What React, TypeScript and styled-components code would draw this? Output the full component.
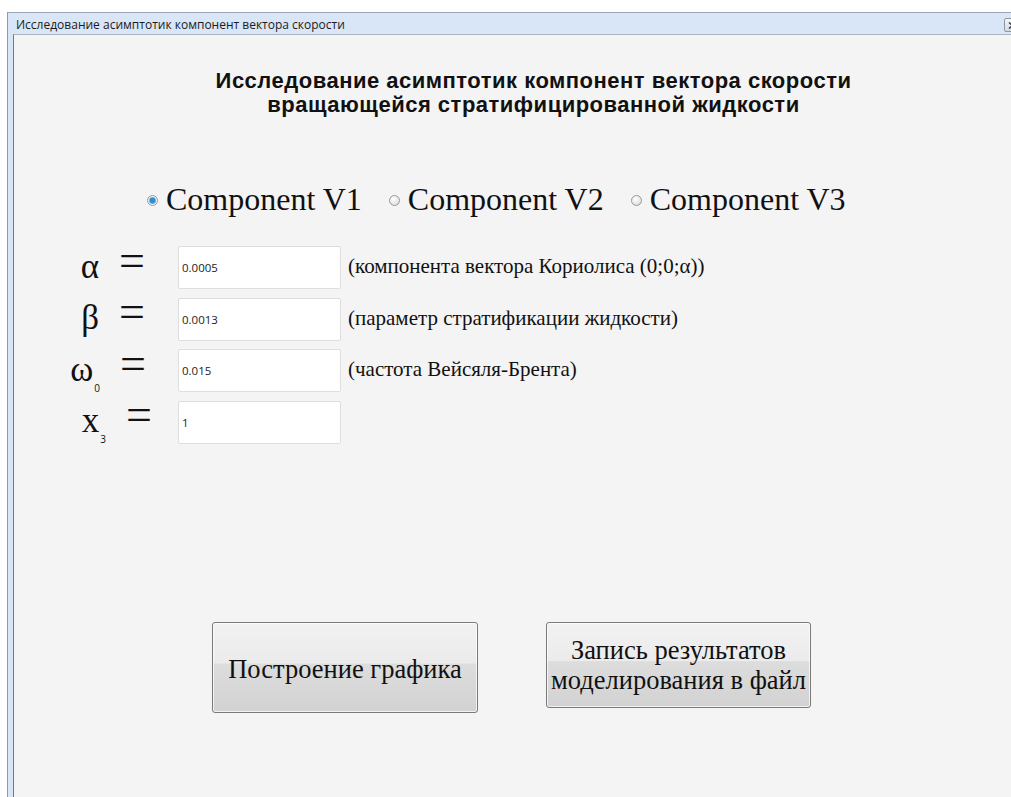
import React, { useState } from 'react';
import styled, { createGlobalStyle } from 'styled-components';

const GlobalStyle = createGlobalStyle`
  html, body {
    margin: 0;
    padding: 0;
    background: #ffffff;
    overflow: hidden;
  }
`;

const Window = styled.div`
  margin: 12px 0 0 7px;
  width: 1019px;
  height: 785px;
  display: flex;
  flex-direction: column;
  border-top: 1px solid #9aa6b4;
  border-left: 1px solid #8f9aa8;
  background: #d9e6f7;
`;

const TitleBar = styled.div`
  height: 20px;
  display: flex;
  align-items: center;
  justify-content: space-between;
  padding: 1px 6px 0 8px;
  font-family: 'Open Sans', 'Noto Sans', sans-serif;
  font-size: 12px;
  color: #1b1b1b;
  flex-shrink: 0;
`;

const CloseButton = styled.div`
  width: 15px;
  height: 12px;
  margin-top: 2px;
  border: 1px solid #8d96a1;
  border-radius: 2px;
  background: linear-gradient(#f4f6f8, #d5dbe2);
  display: flex;
  align-items: center;
  justify-content: center;
`;

const Frame = styled.div`
  flex: 1;
  display: flex;
  padding-left: 5px;
  min-height: 0;
`;

const Content = styled.div`
  flex: 1;
  border-left: 1px solid #6f7a87;
  border-top: 1px solid #aab4c0;
  background: #f4f4f4;
  display: flex;
  flex-direction: column;
`;

const Heading = styled.h1`
  margin: 34px 0 0 26px;
  font-family: 'Liberation Sans', Arial, sans-serif;
  font-size: 22px;
  letter-spacing: 0.5px;
  line-height: 24px;
  font-weight: 700;
  text-align: center;
  color: #111;
`;

const RadioGroup = styled.div`
  margin: 64px 0 0 133px;
  display: flex;
  align-items: center;
  gap: 27px;
`;

const RadioOption = styled.label`
  display: flex;
  align-items: center;
  gap: 8px;
  font-family: 'Liberation Serif', 'Times New Roman', serif;
  font-size: 32px;
  color: #111;
  cursor: pointer;
`;

const RadioDot = styled.span<{ checked: boolean }>`
  width: 11px;
  height: 11px;
  margin-top: 2px;
  border-radius: 50%;
  box-sizing: border-box;
  border: 1px solid #9a9a9a;
  background: ${({ checked }) =>
    checked
      ? 'radial-gradient(circle, #2f8fd6 0 2.6px, #9fc9ea 3.4px, #eef3f7 4px)'
      : 'radial-gradient(circle at 40% 35%, #ffffff, #d4d4d4)'};
`;

const Params = styled.div`
  margin-top: 28px;
  display: grid;
  grid-template-columns: 164px 163px auto;
  grid-auto-rows: 43px;
  row-gap: 8.5px;
  align-items: center;
`;

const Symbol = styled.div<{ shift: number }>`
  justify-self: end;
  padding-right: ${({ shift }) => 33 - shift}px;
  display: flex;
  align-items: baseline;
  font-family: 'Liberation Serif', 'Times New Roman', serif;
  font-size: 35px;
  line-height: 1;
  color: #111;
  position: relative;
  top: -5px;
`;

const Sub = styled.span`
  font-family: 'Open Sans', 'Noto Sans', sans-serif;
  font-size: 10px;
  position: relative;
  top: 11px;
  margin-left: 1px;
`;

const Equals = styled.span`
  font-size: 46px;
  margin-left: 20px;
  position: relative;
  top: -2px;
`;

const Field = styled.input`
  box-sizing: border-box;
  width: 163px;
  height: 43px;
  border: 1px solid #dedede;
  border-radius: 2px;
  background: #ffffff;
  padding: 0 3px;
  font-family: 'Open Sans', 'Noto Sans', sans-serif;
  font-size: 11.5px;
  color: #222;
  outline: none;
`;

const Hint = styled.div`
  padding-left: 7px;
  margin-top: -2px;
  font-family: 'Liberation Serif', 'Times New Roman', serif;
  font-size: 21px;
  color: #111;
`;

const Actions = styled.div`
  margin: 178px 0 0 198px;
  display: flex;
  align-items: flex-start;
  gap: 68px;
`;

const ActionButton = styled.button<{ tall?: boolean }>`
  width: ${({ tall }) => (tall ? '266px' : '265px')};
  height: ${({ tall }) => (tall ? '91px' : '86px')};
  border: 1px solid #7a7a7a;
  border-radius: 3px;
  background: linear-gradient(#f2f2f2 0%, #ebebeb 45%, #dddddd 46%, #d2d2d2 100%);
  box-shadow: inset 0 0 0 1px rgba(255, 255, 255, 0.7);
  font-family: 'Liberation Serif', 'Times New Roman', serif;
  font-size: 26.5px;
  line-height: 30px;
  color: #111;
  padding: ${({ tall }) => (tall ? '4px 0 0' : '0')};
  cursor: pointer;
`;

const params = [
  { sym: 'α', sub: '', shift: 0, value: '0.0005', hint: '(компонента вектора Кориолиса (0;0;α))' },
  { sym: 'β', sub: '', shift: 0, value: '0.0013', hint: '(параметр стратификации жидкости)' },
  { sym: 'ω', sub: '0', shift: 1, value: '0.015', hint: '(частота Вейсяля-Брента)' },
  { sym: 'x', sub: '3', shift: 7, value: '1', hint: '' },
];

const App: React.FC = () => {
  const [component, setComponent] = useState(1);

  return (
    <>
      <GlobalStyle />
      <Window>
        <TitleBar>
          <span>Исследование асимптотик компонент вектора скорости</span>
          <CloseButton>
            <svg width='9' height='7' viewBox='0 0 9 7'>
              <path d='M1 0.5 L8 6.5 M8 0.5 L1 6.5' stroke='#3d444d' strokeWidth='1.6' />
            </svg>
          </CloseButton>
        </TitleBar>
        <Frame>
          <Content>
            <Heading>
              Исследование асимптотик компонент вектора скорости
              <br />
              вращающейся стратифицированной жидкости
            </Heading>

            <RadioGroup>
              {[1, 2, 3].map((n) => (
                <RadioOption key={n} onClick={() => setComponent(n)}>
                  <RadioDot checked={component === n} />
                  Component V{n}
                </RadioOption>
              ))}
            </RadioGroup>

            <Params>
              {params.map((p) => (
                <React.Fragment key={p.sym}>
                  <Symbol shift={p.shift}>
                    {p.sym}
                    {p.sub && <Sub>{p.sub}</Sub>}
                    <Equals>=</Equals>
                  </Symbol>
                  <Field defaultValue={p.value} />
                  <Hint>{p.hint}</Hint>
                </React.Fragment>
              ))}
            </Params>

            <Actions>
              <ActionButton tall>Построение графика</ActionButton>
              <ActionButton>
                Запись результатов
                <br />
                моделирования в файл
              </ActionButton>
            </Actions>
          </Content>
        </Frame>
      </Window>
    </>
  );
};

export default App;
